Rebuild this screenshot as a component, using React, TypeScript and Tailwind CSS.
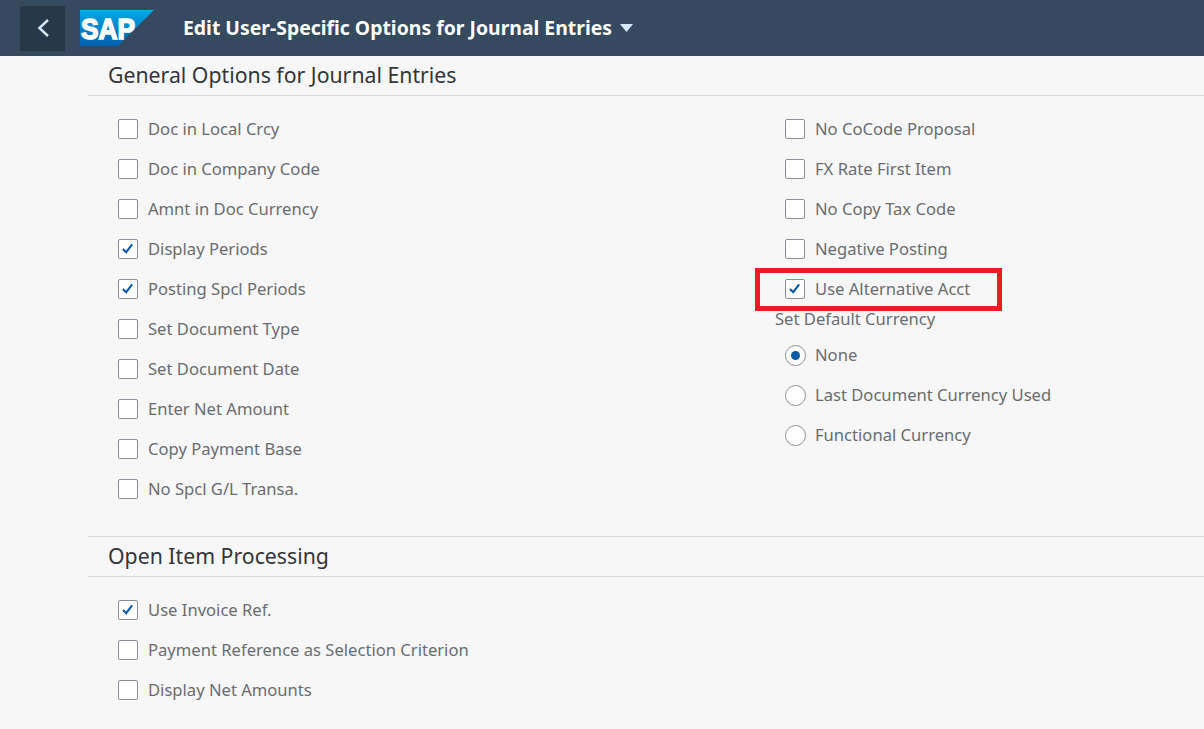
import React from "react";

const FONT = "font-['Noto_Sans','Liberation_Sans',sans-serif]";

function CheckRow({ label, checked = false }: { label: string; checked?: boolean }) {
  return (
    <div className="flex h-10 items-center pl-[10px]">
      <span className="mr-[10px] flex h-5 w-5 shrink-0 items-center justify-center rounded-[2px] border border-[#89919a] bg-white">
        {checked && (
          <svg viewBox="0 0 20 20" className="h-5 w-5" fill="none">
            <path d="M4.4 10 L8 13.6 L14.6 4.8" stroke="#0a5aa5" strokeWidth="2.3" />
          </svg>
        )}
      </span>
      <span className="text-[16.6px] leading-none text-[#6a6d70]">{label}</span>
    </div>
  );
}

function RadioRow({ label, checked = false }: { label: string; checked?: boolean }) {
  return (
    <div className="flex h-10 items-center pl-[10px]">
      <span className="mr-[9px] flex h-[21px] w-[21px] shrink-0 items-center justify-center rounded-full border-[1.5px] border-[#89919a] bg-white">
        {checked && <span className="h-[9px] w-[9px] rounded-full bg-[#0a5aa5]" />}
      </span>
      <span className="text-[16.6px] leading-none text-[#6a6d70]">{label}</span>
    </div>
  );
}

function SectionTitle({ title }: { title: string }) {
  return (
    <div className="flex h-10 items-center border-b border-[#d9d9d9] pb-[2px] pl-5 text-[21.25px] leading-none text-[#32363a]">
      {title}
    </div>
  );
}

export default function App() {
  return (
    <div className={`relative h-[729px] w-[1204px] overflow-hidden bg-[#f7f7f7] ${FONT}`}>
      <header className="flex h-14 items-center bg-[#354a5f] pl-5">
        <button className="flex h-[45px] w-[45px] items-center justify-center bg-[#283848]">
          <svg viewBox="0 0 14 20" className="h-5 w-[14px]" fill="none">
            <path d="M12 2 L3.4 10 L12 18" stroke="#d1e8ff" strokeWidth="2.4" />
          </svg>
        </button>
        <svg viewBox="0 0 74 36" className="ml-[15px] h-9 w-[74px]">
          <defs>
            <linearGradient id="sapg" x1="0" y1="0" x2="0" y2="1">
              <stop offset="0" stopColor="#00a9e8" />
              <stop offset="1" stopColor="#0060ad" />
            </linearGradient>
          </defs>
          <path d="M0 0 H74 L38 36 H0 Z" fill="url(#sapg)" />
          <text
            x="1"
            y="29"
            fill="#ffffff"
            stroke="#ffffff"
            strokeWidth="1.6"
            fontFamily="Liberation Sans, sans-serif"
            fontWeight="700"
            fontSize="29"
            textLength="54"
            lengthAdjust="spacingAndGlyphs"
          >
            SAP
          </text>
        </svg>
        <div className="ml-[29px] flex items-center">
          <span className="text-[19.4px] font-bold leading-none text-white">
            Edit User-Specific Options for Journal Entries
          </span>
          <svg viewBox="0 0 13 8" className="ml-2 h-2 w-[13px]">
            <path d="M0 0 H13 L6.5 8 Z" fill="#d1e8ff" />
          </svg>
        </div>
      </header>

      <main className="pl-[88px]">
        <SectionTitle title="General Options for Journal Entries" />
        <div className="grid h-[441px] grid-cols-[667px_1fr] border-b border-[#d9d9d9] pl-5 pt-[13px]">
          <div>
            <CheckRow label="Doc in Local Crcy" />
            <CheckRow label="Doc in Company Code" />
            <CheckRow label="Amnt in Doc Currency" />
            <CheckRow label="Display Periods" checked />
            <CheckRow label="Posting Spcl Periods" checked />
            <CheckRow label="Set Document Type" />
            <CheckRow label="Set Document Date" />
            <CheckRow label="Enter Net Amount" />
            <CheckRow label="Copy Payment Base" />
            <CheckRow label="No Spcl G/L Transa." />
          </div>
          <div>
            <CheckRow label="No CoCode Proposal" />
            <CheckRow label="FX Rate First Item" />
            <CheckRow label="No Copy Tax Code" />
            <CheckRow label="Negative Posting" />
            <CheckRow label="Use Alternative Acct" checked />
            <div className="flex h-[20px] items-center text-[16.6px] leading-none text-[#6a6d70]">
              Set Default Currency
            </div>
            <div className="pt-[6px]">
              <RadioRow label="None" checked />
              <RadioRow label="Last Document Currency Used" />
              <RadioRow label="Functional Currency" />
            </div>
          </div>
        </div>
        <SectionTitle title="Open Item Processing" />
        <div className="pl-5 pt-[13px]">
          <CheckRow label="Use Invoice Ref." checked />
          <CheckRow label="Payment Reference as Selection Criterion" />
          <CheckRow label="Display Net Amounts" />
        </div>
      </main>

      <div className="absolute left-[755px] top-[268px] h-[43px] w-[247px] border-[5px] border-[#ed1c24]" />
    </div>
  );
}
